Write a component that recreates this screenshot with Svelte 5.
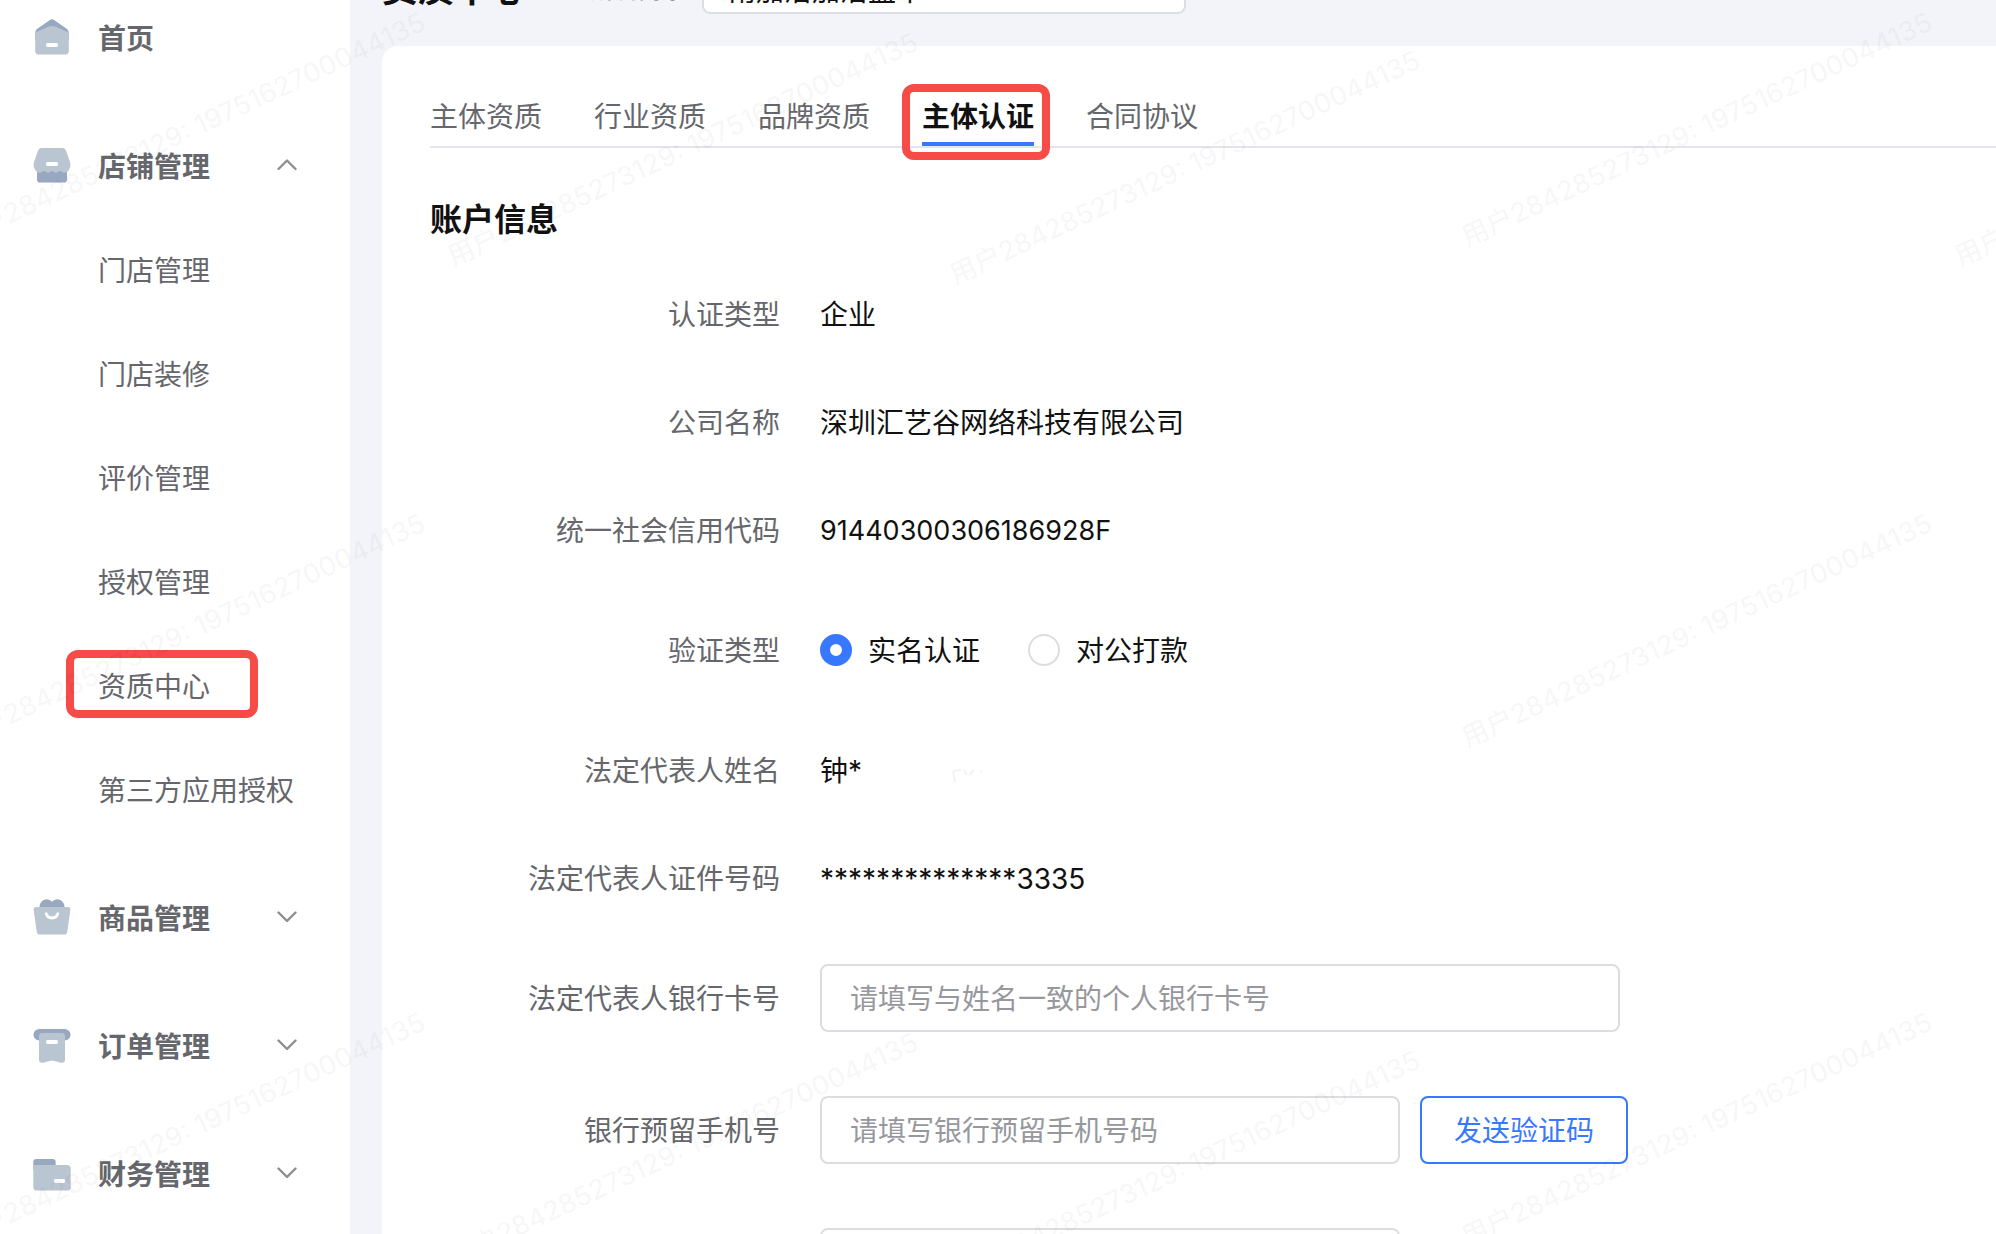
<script>
  const groups = [
    { label: '首页', icon: 'home', arrow: null, items: [] },
    {
      label: '店铺管理',
      icon: 'shop',
      arrow: 'up',
      items: ['门店管理', '门店装修', '评价管理', '授权管理', '资质中心', '第三方应用授权'],
    },
    { label: '商品管理', icon: 'goods', arrow: 'down', items: [] },
    { label: '订单管理', icon: 'order', arrow: 'down', items: [] },
    { label: '财务管理', icon: 'finance', arrow: 'down', items: [] },
  ];
  const marked = '资质中心';

  const tabs = ['主体资质', '行业资质', '品牌资质', '主体认证', '合同协议'];
  let activeTab = $state('主体认证');

  const companyInfo = [
    { key: '认证类型', value: '企业' },
    { key: '公司名称', value: '深圳汇艺谷网络科技有限公司' },
    { key: '统一社会信用代码', value: '91440300306186928F', code: true },
  ];
  const personInfo = [
    { key: '法定代表人姓名', value: '钟*' },
    { key: '法定代表人证件号码', value: '**************3335' },
  ];

  let verifyType = $state('实名认证');
  let store = $state('南加洁加洁盖中');

  // Left end of each watermark's baseline
  const watermarks = [
    [-40, 247], [453, 267], [955, 285], [1467, 247], [1960, 267],
    [-40, 748], [1467, 748],
    [-40, 1247], [453, 1267], [955, 1285], [1467, 1247],
  ];
</script>

{#snippet infoLine(row)}
  <div class="line">
    <span class="key">{row.key}</span>
    <span class="value" class:code={row.code}>{row.value}</span>
  </div>
{/snippet}

<div class="app">
  <nav class="sidebar">
    {#each groups as g}
      <div class="group">
        <button class="row head">
          <svg class="icon" width="40" height="40" viewBox="0 0 40 40" aria-hidden="true">
            {#if g.icon === 'home'}
              <path class="dark" d="M17.6 2.2 Q20 .4 22.4 2.2 L35 11 Q36.8 12.5 36.8 15 V22 H3.2 V15 Q3.2 12.5 5 11Z" />
              <path class="light" d="M3.2 14.5 L17 8.6 Q20 7.2 23 8.6 L36.8 14.5 V33 Q36.8 36.6 33.2 36.6 H6.8 Q3.2 36.6 3.2 33Z" />
              <rect class="hole" x="14" y="25" width="12" height="4" rx="1.5" />
            {:else if g.icon === 'shop'}
              <path class="dark" d="M5 20 H35 V33.5 Q35 36.6 32 36.6 H8 Q5 36.6 5 33.5Z" />
              <path class="light" d="M9.5 2 H30.5 Q32.8 2 33.8 4.3 L38 16 Q39.5 20.5 36.5 24.5 Q34 27.8 30 26 Q28 24.5 26.5 25.5 Q23.5 27.8 20.8 25.3 Q20 24.6 19.2 25.3 Q16.5 27.8 13.5 25.5 Q12 24.5 10 26 Q6 27.8 3.5 24.5 Q.5 20.5 2 16 L6.2 4.3 Q7.2 2 9.5 2Z" />
              <rect class="hole" x="14" y="16" width="12" height="4" rx="1.5" />
            {:else if g.icon === 'goods'}
              <path class="dark" d="M7.5 12 V8 Q9 1.5 15 1.3 Q18 1.5 20 3.8 Q22 1.5 25 1.3 Q31 1.5 32.5 8 V12Z" />
              <path class="light" d="M4.5 9 H35.5 Q38.7 9 38.3 12.2 L35.3 33.8 Q35 36.6 32 36.6 H8 Q5 36.6 4.7 33.8 L1.7 12.2 Q1.3 9 4.5 9Z" />
              <path class="smile" d="M14.2 15.8 Q15.8 20 20 20 Q24.2 20 25.8 15.8" />
            {:else if g.icon === 'order'}
              <rect class="dark" x="1.5" y="3" width="37" height="11.5" rx="5.7" />
              <path class="light" d="M10.2 7 H29.8 Q33 7 33 10.2 V33.5 Q33 37.5 29 36.7 L20 34.6 L11 36.7 Q7 37.5 7 33.5 V10.2 Q7 7 10.2 7Z" />
              <rect class="hole" x="14" y="14" width="12" height="4" rx="1.5" />
            {:else}
              <path class="dark" d="M4.5 5 H20.5 Q23.7 5 23.7 8.2 V16 H1.3 V8.2 Q1.3 5 4.5 5Z" />
              <path class="light" d="M1.3 11 H35 Q38.7 11 38.7 14.5 V33.2 Q38.7 36.6 35.2 36.6 H4.8 Q1.3 36.6 1.3 33.2Z" />
              <rect class="hole" x="22" y="25" width="11" height="4" rx="1.5" />
            {/if}
          </svg>
          <span class="name">{g.label}</span>
          {#if g.arrow}
            <svg class="chevron" width="20" height="14" viewBox="0 0 20 14" aria-hidden="true">
              <path d={g.arrow === 'up' ? 'M1.5 10 L10 1.5 L18.5 10' : 'M1.5 1.5 L10 10 L18.5 1.5'} />
            </svg>
          {/if}
        </button>
        {#each g.items as item}
          <a class="row sub" href="#top"><span class="text" class:marked={item === marked}>{item}</span></a>
        {/each}
      </div>
    {/each}
  </nav>

  <main class="main">
    <header class="topbar">
      <h1>资质中心</h1>
      <label for="store">所属商家</label>
      <input id="store" type="text" bind:value={store} />
    </header>

    <section class="panel">
      <div class="tabs" role="tablist">
        {#each tabs as tab}
          <button
            role="tab"
            class="tab"
            class:active={activeTab === tab}
            aria-selected={activeTab === tab}
            onclick={() => (activeTab = tab)}>{tab}</button>
        {/each}
      </div>

      <h2>账户信息</h2>

      <form class="form" onsubmit={(e) => e.preventDefault()}>
        {#each companyInfo as row}
          {@render infoLine(row)}
        {/each}

        <div class="line tall" role="radiogroup" aria-labelledby="verify">
          <span class="key" id="verify">验证类型</span>
          <div class="radios">
            {#each ['实名认证', '对公打款'] as option}
              <label class="radio">
                <input type="radio" name="verify" value={option} bind:group={verifyType} />
                <span class="text">{option}</span>
              </label>
            {/each}
          </div>
        </div>

        {#each personInfo as row}
          {@render infoLine(row)}
        {/each}

        <div class="line tall">
          <label class="key" for="card">法定代表人银行卡号</label>
          <input class="box wide" id="card" type="text" placeholder="请填写与姓名一致的个人银行卡号" />
        </div>
        <div class="line tall">
          <label class="key" for="phone">银行预留手机号</label>
          <div class="pair">
            <input class="box" id="phone" type="text" placeholder="请填写银行预留手机号码" />
            <button class="send" type="button">发送验证码</button>
          </div>
        </div>
        <div class="line tall">
          <span class="key"></span>
          <input class="box" type="text" aria-label="验证码" />
        </div>
      </form>
    </section>
  </main>

  <svg class="watermarks" aria-hidden="true">
    {#each watermarks as [x, y]}
      <text transform="translate({x} {y}) rotate(-25)">用户284285273129: 1975162700044135</text>
    {/each}
    <path d="M953 771 L955 782 M953 771 L961 770 M964 770 L967 775 M969 775 L974 770 M980 771 L982 772" />
  </svg>
</div>

<style>
  :global(body) {
    margin: 0;
    overflow: hidden;
  }
  .app {
    position: relative;
    display: flex;
    height: 100vh;
    overflow: hidden;
    background: #f3f4f9;
    color: #111;
    font: 28px/44px Inter, 'Noto Sans CJK SC', sans-serif;
  }
  .app * {
    box-sizing: border-box;
  }
  button,
  input {
    font: inherit;
    color: inherit;
  }
  button {
    border: 0;
    padding: 0;
    background: none;
    cursor: pointer;
  }

  .sidebar {
    flex: none;
    width: 350px;
    margin-top: -14px;
    background: #fff;
    color: #66676c;
  }
  .group + .group {
    margin-top: 24px;
  }
  .row {
    display: flex;
    align-items: center;
    width: 100%;
    height: 104px;
    color: #66676c;
    text-decoration: none;
  }
  .head {
    padding: 0 53px 0 32px;
    font-weight: 700;
  }
  .icon {
    flex: none;
  }
  .name,
  .text,
  .key,
  .value {
    padding-top: 2px;
  }
  .name {
    flex: 1;
    margin-left: 26px;
    text-align: left;
  }
  .sub {
    padding-left: 98px;
  }
  .marked {
    position: relative;
  }
  .marked::after {
    content: '';
    position: absolute;
    inset: -13px -48px -9px -32px;
    border: 8px solid #f64b47;
    border-radius: 12px;
  }
  .dark {
    fill: #97a8c0;
  }
  .light {
    fill: #b9c5d1;
  }
  .hole {
    fill: #fff;
  }
  .smile {
    fill: none;
    stroke: #fff;
    stroke-width: 3;
    stroke-linecap: round;
  }
  .chevron path {
    fill: none;
    stroke: #8d8e95;
    stroke-width: 2.4;
    stroke-linecap: round;
    stroke-linejoin: round;
  }

  .main {
    flex: 1;
    min-width: 0;
    display: flex;
    flex-direction: column;
    padding-left: 32px;
  }
  .topbar {
    flex: none;
    display: flex;
    align-items: center;
    height: 50px;
    margin: -36px 0 32px;
  }
  .topbar h1 {
    margin: 0;
    font-size: 36px;
    font-weight: 700;
  }
  .topbar label {
    margin: 0 16px 0 64px;
    padding-top: 2px;
    font-size: 24px;
    color: #66676c;
  }
  .topbar input {
    width: 484px;
    height: 50px;
    padding: 0 24px;
    border: 2px solid #dcdee3;
    border-radius: 8px;
    background: #fff;
  }

  .panel {
    flex: 1;
    padding: 36px 0 0 48px;
    border-radius: 16px 0 0 0;
    background: #fff;
  }
  .tabs {
    display: flex;
    gap: 52px;
    border-bottom: 2px solid #e4e5ec;
  }
  .tab {
    position: relative;
    height: 64px;
    padding: 12px 0 2px;
    border-bottom: 4px solid transparent;
    color: #66676c;
  }
  .tab.active {
    border-color: #3778ff;
    color: #111;
    font-weight: 700;
  }
  .tab.active::after {
    content: '';
    position: absolute;
    inset: 2px -16px -18px -20px;
    border: 8px solid #f64b47;
    border-radius: 12px;
  }
  h2 {
    margin: 48px 0;
    font-size: 32px;
    line-height: 48px;
    font-weight: 700;
  }

  .form {
    display: grid;
    gap: 64px;
  }
  .line {
    display: grid;
    grid-template-columns: 350px minmax(0, 1fr);
    grid-template-rows: 100%;
    column-gap: 40px;
    align-items: center;
    height: 44px;
  }
  .tall {
    height: 68px;
  }
  .key {
    text-align: right;
    color: #66676c;
  }
  .code {
    font-size: 27px;
  }
  .radios {
    display: flex;
    gap: 48px;
  }
  .radio {
    display: flex;
    align-items: center;
    gap: 16px;
  }
  .radio input {
    appearance: none;
    width: 32px;
    height: 32px;
    margin: 0;
    border: 2px solid #dcdde0;
    border-radius: 50%;
    background: #fff;
  }
  .radio input:checked {
    border: 10px solid #3778ff;
  }
  .box {
    width: 580px;
    height: 68px;
    padding: 2px 28px 0;
    border: 2px solid #dcdde0;
    border-radius: 8px;
    background: #fff;
  }
  .wide {
    width: 800px;
  }
  .box::placeholder {
    color: #97989d;
    opacity: 1;
  }
  .pair {
    display: flex;
    gap: 20px;
  }
  .send {
    width: 208px;
    padding-top: 2px;
    border: 2px solid #3778ff;
    border-radius: 8px;
    color: #3778ff;
  }

  .watermarks {
    position: absolute;
    inset: 0;
    width: 100%;
    height: 100%;
    pointer-events: none;
  }
  .watermarks text {
    font-size: 27px;
    font-weight: 500;
    fill: #000;
    fill-opacity: 0.045;
  }
  .watermarks path {
    fill: none;
    stroke: #000;
    stroke-opacity: 0.05;
    stroke-width: 2;
  }
</style>
